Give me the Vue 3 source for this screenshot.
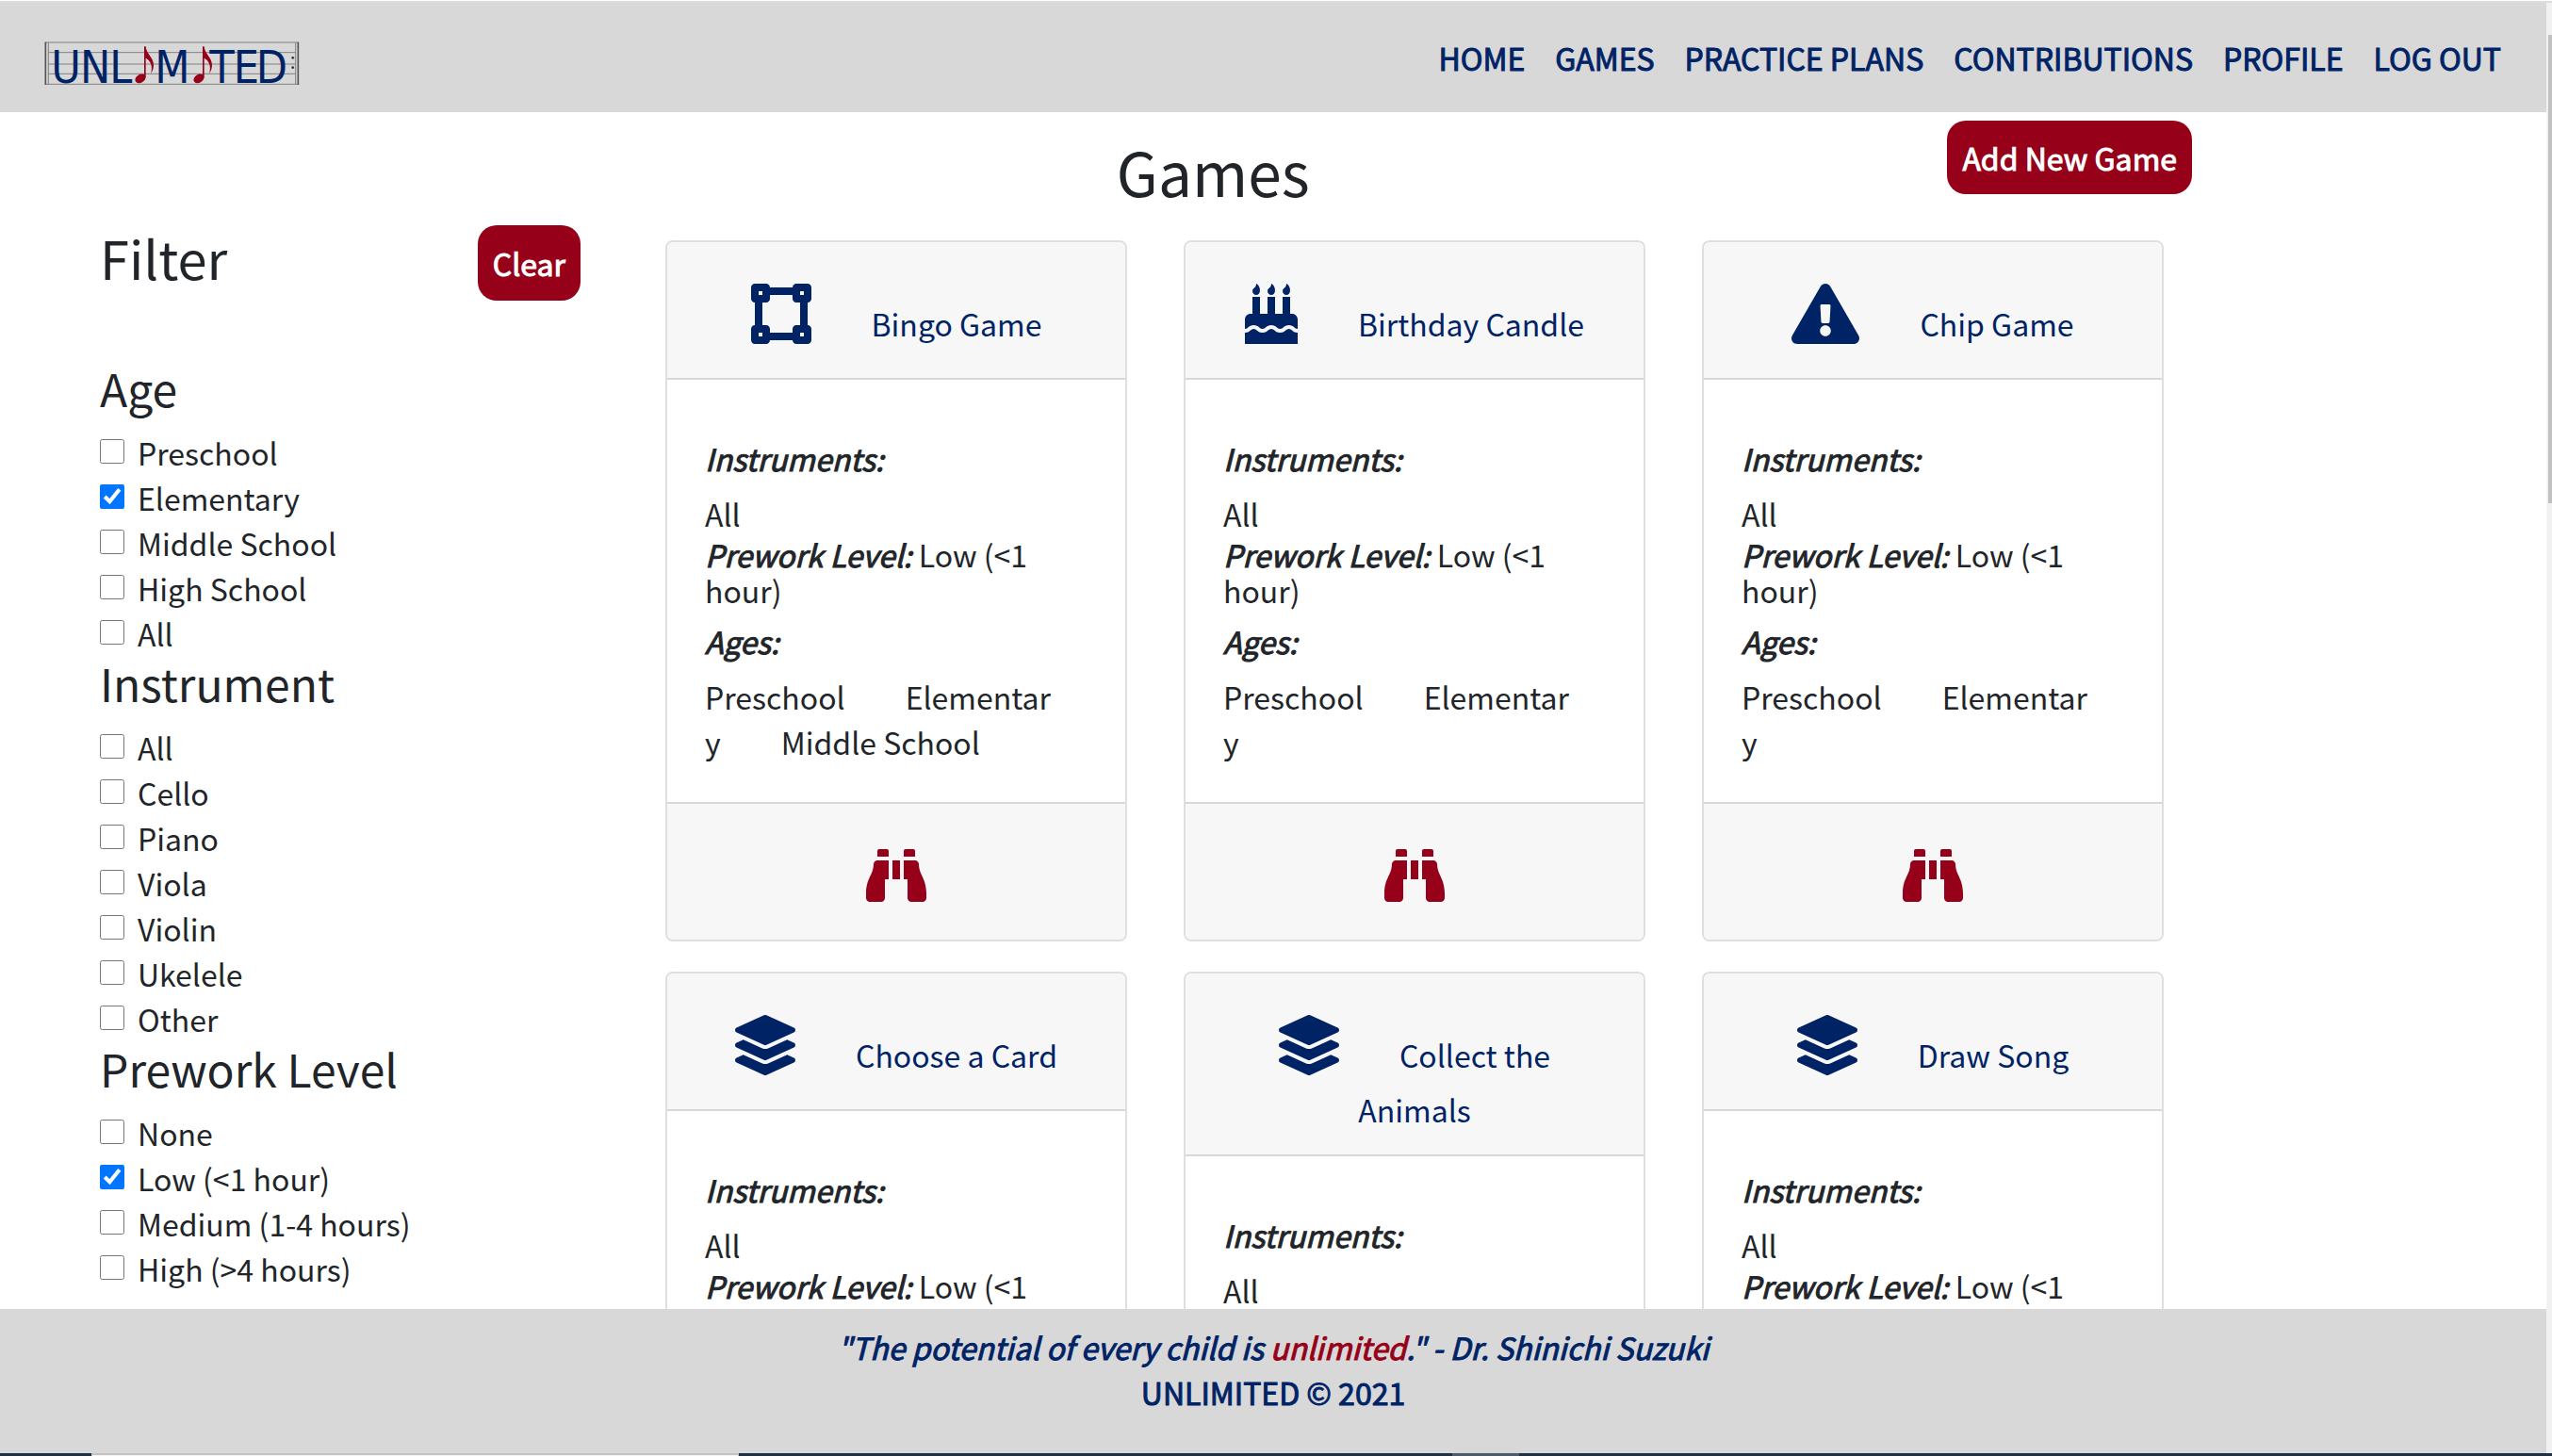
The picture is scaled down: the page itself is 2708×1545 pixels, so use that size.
<script setup>
import { reactive } from 'vue'

const navLinks = ['HOME', 'GAMES', 'PRACTICE PLANS', 'CONTRIBUTIONS', 'PROFILE', 'LOG OUT']

const icons = {
  square: {
    width: 512,
    path: 'M512 128V32c0-17.67-14.33-32-32-32h-96c-17.67 0-32 14.33-32 32H160c0-17.67-14.33-32-32-32H32C14.33 0 0 14.33 0 32v96c0 17.67 14.33 32 32 32v192c-17.67 0-32 14.33-32 32v96c0 17.67 14.33 32 32 32h96c17.67 0 32-14.33 32-32h192c0 17.67 14.33 32 32 32h96c17.67 0 32-14.33 32-32v-96c0-17.67-14.33-32-32-32V160c17.67 0 32-14.33 32-32zm-96-64h32v32h-32V64zM64 64h32v32H64V64zm32 384H64v-32h32v32zm352 0h-32v-32h32v32zm-32-96h-32c-17.67 0-32 14.33-32 32v32H160v-32c0-17.67-14.33-32-32-32H96V160h32c17.67 0 32-14.33 32-32V96h192v32c0 17.67 14.33 32 32 32h32v192z'
  },
  cake: {
    width: 448,
    path: 'M448 384c-28.02 0-31.26-32-74.5-32-43.43 0-46.825 32-74.75 32-27.695 0-31.454-32-74.75-32-42.842 0-47.218 32-74.5 32-28.148 0-31.202-32-74.75-32-43.547 0-46.653 32-74.75 32v-80c0-26.5 21.5-48 48-48h16V112h64v144h64V112h64v144h64V112h64v144h16c26.5 0 48 21.5 48 48v80zm0 128H0v-96c43.356 0 46.767-32 74.75-32 27.951 0 31.253 32 74.75 32 42.843 0 47.217-32 74.5-32 28.148 0 31.201 32 74.75 32 43.357 0 46.767-32 74.75-32 27.488 0 31.252 32 74.5 32v96zM96 96c-17.75 0-32-14.25-32-32 0-31 32-23 32-64 12 0 32 29.5 32 56s-14.25 40-32 40zm128 0c-17.75 0-32-14.25-32-32 0-31 32-23 32-64 12 0 32 29.5 32 56s-14.25 40-32 40zm128 0c-17.75 0-32-14.25-32-32 0-31 32-23 32-64 12 0 32 29.5 32 56s-14.25 40-32 40z'
  },
  triangle: {
    width: 576,
    path: 'M569.517 440.013C587.975 472.007 564.806 512 527.94 512H48.054c-36.937 0-59.999-40.055-41.577-71.987L246.423 23.985c18.467-32.009 64.72-31.951 83.154 0l239.94 416.028zM288 354c-25.405 0-46 20.595-46 46s20.595 46 46 46 46-20.595 46-46-20.595-46-46-46zm-43.673-165.346l7.418 136c.347 6.364 5.609 11.346 11.982 11.346h48.546c6.373 0 11.635-4.982 11.982-11.346l7.418-136c.375-6.874-5.098-12.654-11.982-12.654h-63.383c-6.884 0-12.356 5.78-11.981 12.654z'
  },
  layers: {
    width: 512,
    path: 'M12.41 148.02l232.94 105.67c6.8 3.09 14.49 3.09 21.29 0l232.94-105.67c16.55-7.51 16.55-32.52 0-40.03L266.65 2.31a25.607 25.607 0 0 0-21.29 0L12.41 107.98c-16.55 7.51-16.55 32.53 0 40.04zm487.18 88.28l-58.09-26.33-161.64 73.27c-7.56 3.43-15.59 5.17-23.86 5.17s-16.29-1.74-23.86-5.17L70.51 209.97l-58.1 26.33c-16.55 7.5-16.55 32.5 0 40l232.94 105.59c6.8 3.08 14.49 3.08 21.29 0L499.59 276.3c16.55-7.5 16.55-32.5 0-40zm0 127.8l-57.87-26.23-161.86 73.37c-7.56 3.43-15.59 5.17-23.86 5.17s-16.29-1.74-23.86-5.17L70.29 337.87 12.41 364.1c-16.55 7.5-16.55 32.5 0 40l232.94 105.59c6.8 3.08 14.49 3.08 21.29 0L499.59 404.1c16.55-7.5 16.55-32.5 0-40z'
  }
}

const filters = reactive([
  {
    title: 'Age',
    options: [
      { label: 'Preschool', on: false },
      { label: 'Elementary', on: true },
      { label: 'Middle School', on: false },
      { label: 'High School', on: false },
      { label: 'All', on: false }
    ]
  },
  {
    title: 'Instrument',
    options: [
      { label: 'All', on: false },
      { label: 'Cello', on: false },
      { label: 'Piano', on: false },
      { label: 'Viola', on: false },
      { label: 'Violin', on: false },
      { label: 'Ukelele', on: false },
      { label: 'Other', on: false }
    ]
  },
  {
    title: 'Prework Level',
    options: [
      { label: 'None', on: false },
      { label: 'Low (<1 hour)', on: true },
      { label: 'Medium (1-4 hours)', on: false },
      { label: 'High (>4 hours)', on: false }
    ]
  }
])

const games = [
  { name: 'Bingo Game', icon: icons.square, ages: ['Preschool', 'Elementary', 'Middle School'] },
  { name: 'Birthday Candle', icon: icons.cake, ages: ['Preschool', 'Elementary'] },
  { name: 'Chip Game', icon: icons.triangle, ages: ['Preschool', 'Elementary'] },
  { name: 'Choose a Card', icon: icons.layers, ages: ['Preschool', 'Elementary'] },
  { name: 'Collect the Animals', icon: icons.layers, ages: ['Preschool', 'Elementary'] },
  { name: 'Draw Song', icon: icons.layers, ages: ['Preschool', 'Elementary'] }
]

function clearFilters() {
  filters.forEach((group) => group.options.forEach((option) => { option.on = false }))
}
</script>

<template>
  <div class="screen">
    <div class="window">
      <div class="page">
        <header class="topbar">
          <a class="logo" href="#" aria-label="Unlimited">
            <svg viewBox="50 42 813 141" width="271" height="47">
              <g stroke="#808080" stroke-width="3">
                <path d="M52 45H860M62 77H850M62 114H850M62 145H850M52 178H860" />
                <path d="M63 45V178M850 45V178" />
              </g>
              <path d="M54 44V180M858 44V180" stroke="#555" stroke-width="5" />
              <circle cx="841" cy="94" r="4" fill="#333" />
              <circle cx="841" cy="125" r="4" fill="#333" />
              <g class="logo-text">
                <text x="72 164 258" y="174">UNL</text>
                <text x="402" y="174">M</text>
                <text x="576 652 724" y="174">TED</text>
              </g>
              <g v-for="x in [0, 186]" :key="x" fill="#960018" :transform="`translate(${x} 0)`">
                <path d="M368 58h5c1 24 25 34 25 60 0 10-4 20-9 27 8-25-2-44-16-50v62h-5z" />
                <ellipse cx="356" cy="160" rx="18" ry="13" transform="rotate(-32 356 160)" />
              </g>
            </svg>
          </a>
          <nav class="nav">
            <a v-for="link in navLinks" :key="link" class="strong" href="#">{{ link }}</a>
          </nav>
        </header>

        <main class="content">
          <div class="title-row">
            <h1>Games</h1>
            <button type="button" class="action strong">Add New Game</button>
          </div>

          <div class="columns">
            <aside class="filters">
              <div class="filters-head">
                <h2>Filter</h2>
                <button type="button" class="action strong" @click="clearFilters">Clear</button>
              </div>
              <section v-for="group in filters" :key="group.title">
                <h3>{{ group.title }}</h3>
                <label v-for="option in group.options" :key="option.label" class="option">
                  <input v-model="option.on" type="checkbox" />
                  <span>{{ option.label }}</span>
                </label>
              </section>
            </aside>

            <div class="cards">
              <article v-for="game in games" :key="game.name" class="card">
                <div class="card-head">
                  <a href="#">
                    <svg class="game-icon" :viewBox="`0 0 ${game.icon.width} 512`" :width="game.icon.width / 8" height="64">
                      <path fill="currentColor" :d="game.icon.path" />
                    </svg>{{ game.name }}
                  </a>
                </div>
                <div class="card-body">
                  <h4><em class="strong">Instruments:</em></h4>
                  <p>All</p>
                  <h4><em class="strong">Prework Level:</em> Low (&lt;1 hour)</h4>
                  <h4><em class="strong">Ages:</em></h4>
                  <p class="ages"><span v-for="age in game.ages" :key="age">{{ age }}</span></p>
                </div>
                <div class="card-foot">
                  <a href="#" :aria-label="`View ${game.name}`">
                    <svg class="view-icon" viewBox="0 0 512 512" width="64" height="64">
                      <path fill="currentColor" d="M416 48c0-8.84-7.16-16-16-16h-64c-8.84 0-16 7.16-16 16v48h96V48zM63.91 159.99C61.4 253.84 3.46 274.22 0 404v44c0 17.67 14.33 32 32 32h96c17.67 0 32-14.33 32-32V288h32V128H95.84c-17.63 0-31.45 14.37-31.93 31.99zm384.18 0c-.48-17.62-14.3-31.99-31.93-31.99H320v160h32v160c0 17.67 14.33 32 32 32h96c17.67 0 32-14.33 32-32v-44c-3.46-129.78-61.4-150.16-63.91-244.01zM176 32h-64c-8.84 0-16 7.16-16 16v48h96V48c0-8.84-7.16-16-16-16zm48 256h64V128h-64v160z" />
                    </svg>
                  </a>
                </div>
              </article>
            </div>
          </div>
        </main>

        <footer class="footer strong">
          <div><em>"The potential of every child is <span class="accent">unlimited</span>." - Dr. Shinichi Suzuki</em></div>
          <div>UNLIMITED © 2021</div>
        </footer>
      </div>
      <div class="scrollbar"><div class="thumb"></div></div>
    </div>
    <div class="taskbar">
      <div class="search"></div>
      <div class="task"></div>
    </div>
  </div>
</template>

<style>
body {
  margin: 0;
  background: #fff;
}
</style>

<style scoped>
.screen {
  --navy: #002366;
  --red: #960018;
  --grey: #d8d8d8;
  display: flex;
  flex-direction: column;
  box-sizing: border-box;
  height: 100vh;
  padding-top: 1px;
  overflow: hidden;
  font-family: "Noto Sans CJK JP", "Noto Sans", sans-serif;
  font-size: 32px;
  line-height: 48px;
  color: #212529;
}

.screen * {
  box-sizing: border-box;
}

.window {
  display: flex;
  flex: 1;
  min-height: 0;
  border-top: 2px solid #dadce0;
}

.page {
  display: flex;
  flex: 1;
  flex-direction: column;
  min-width: 0;
}

h1, h2, h3, h4, p {
  margin: 0;
  font-weight: 400;
}

a {
  color: var(--navy);
  text-decoration: none;
}

/* Single-weight face thickened by an outline */
.strong {
  -webkit-text-stroke: 1px currentColor;
}

.topbar {
  display: flex;
  flex-shrink: 0;
  align-items: center;
  justify-content: space-between;
  height: 116px;
  padding: 0 48px 0 47px;
  background: var(--grey);
}

.logo svg {
  display: block;
  margin-top: 12px;
  overflow: visible;
}

.logo-text {
  font-family: "DejaVu Sans Condensed", "DejaVu Sans", sans-serif;
  font-size: 144px;
  font-stretch: condensed;
  fill: var(--navy);
}

.nav {
  display: flex;
  gap: 32px;
}

.content {
  flex: 1;
  min-height: 0;
  overflow: hidden;
}

.title-row {
  display: flex;
  align-items: flex-start;
  height: 120px;
  padding: 9px 376px 0 508px;
}

h1 {
  flex: 1;
  padding-top: 15px;
  font-size: 64px;
  line-height: 77px;
  text-align: center;
}

.action {
  height: 78px;
  padding: 0 16px;
  border: 0;
  border-radius: 20px;
  background: var(--red);
  color: #fff;
  font-family: inherit;
  font-size: 32px;
  line-height: 48px;
}

.columns {
  display: flex;
  gap: 90px;
  padding: 0 64px 0 106px;
}

.filters {
  flex: 0 0 510px;
}

.filters-head {
  display: flex;
  justify-content: space-between;
  height: 80px;
  margin-bottom: 64px;
}

h2 {
  font-size: 56px;
  line-height: 67px;
}

.filters-head .action {
  height: 80px;
}

h3 {
  margin-bottom: 16px;
  font-size: 48px;
  line-height: 57px;
}

.option {
  display: flex;
  gap: 14px;
}

.option input {
  width: 26px;
  height: 26px;
  margin: 10px 0 0;
  accent-color: #0075ff;
}

.cards {
  display: grid;
  flex: 1;
  grid-template-columns: repeat(auto-fill, 490px);
  align-items: start;
  gap: 32px 60px;
  padding-top: 16px;
}

.card {
  overflow: hidden;
  border: 2px solid #dfdfdf;
  border-radius: 8px;
}

.card-head {
  padding: 24px 40px;
  border-bottom: 2px solid #d8d8d8;
  background: #f7f7f7;
  text-align: center;
}

.game-icon {
  margin: 20px 64px 12px 0;
  vertical-align: -20px;
}

.card-body {
  padding: 64px 40px 40px;
}

h4 {
  margin-bottom: 16px;
  font-size: 32px;
  line-height: 38px;
}

.ages {
  padding-right: 32px;
  word-break: break-all;
}

.ages span {
  margin-right: 64px;
}

.card-foot {
  padding: 24px 40px;
  border-top: 2px solid #d8d8d8;
  background: #f7f7f7;
}

.card-foot a {
  color: var(--red);
}

.view-icon {
  display: block;
  margin: 20px auto 12px;
}

.footer {
  flex-shrink: 0;
  padding: 16px 0 41px;
  background: var(--grey);
  color: var(--navy);
  text-align: center;
}

.accent {
  color: var(--red);
}

.scrollbar {
  flex: 0 0 6px;
  padding: 34px 0 0 2px;
  background: #f1f1f1;
}

.thumb {
  height: 33%;
  background: #c1c1c1;
}

.taskbar {
  display: flex;
  flex: 0 0 3px;
  padding-left: 97px;
  background: #1f3244;
}

.search {
  width: 687px;
  border: solid #c2c2c2;
  border-width: 2px 1px 0;
  background: #f4f4f4;
}

.task {
  width: 71px;
  margin-left: 757px;
  background: #4d5c6b;
}
</style>
